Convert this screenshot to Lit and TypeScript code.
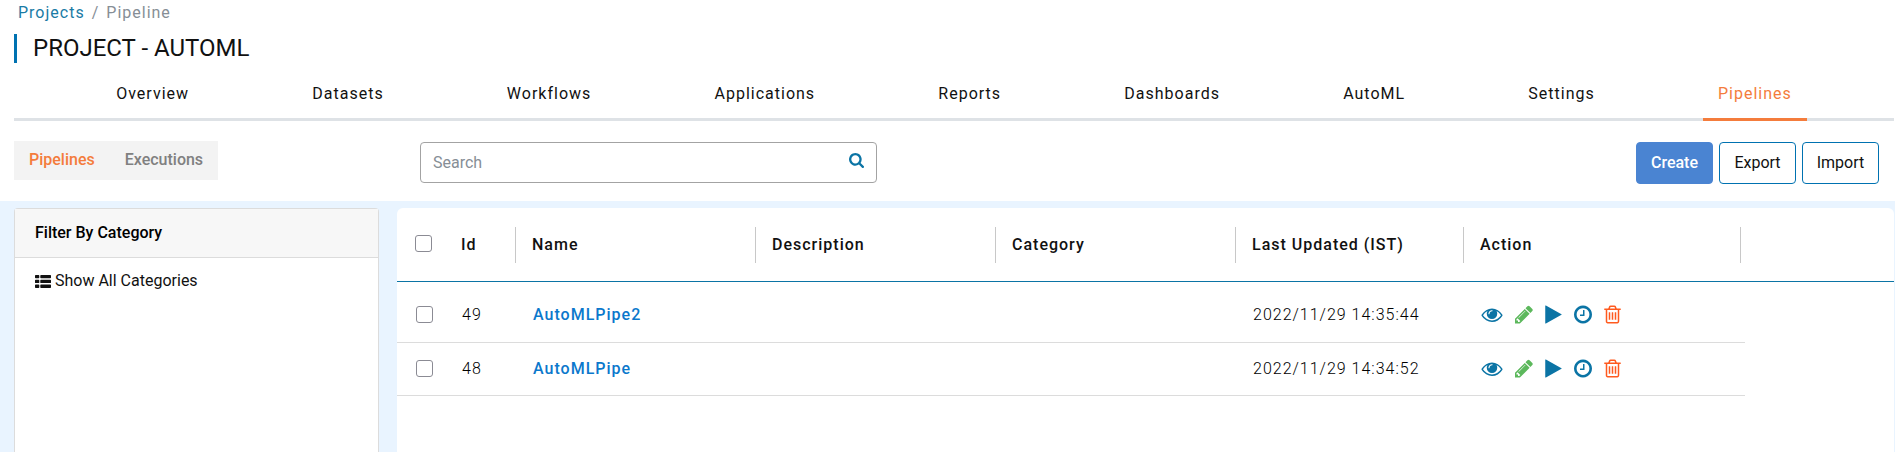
import { LitElement, html, css, svg } from "lit";
import { customElement, state } from "lit/decorators.js";
import { classMap } from "lit/directives/class-map.js";

interface Glyph {
  box: string;
  d: string;
}

const glyphs: Record<string, Glyph> = {
  find: {
    box: "64 128 1664 1664",
    d: "M1216 832q0-185-131.500-316.500t-316.500-131.500-316.500 131.500-131.500 316.500 131.500 316.500 316.500 131.500 316.500-131.500 131.500-316.500zm512 832q0 52-38 90t-90 38q-54 0-90-38l-343-342q-179 124-399 124-143 0-273.500-55.500t-225-150-150-225-55.500-273.500 55.500-273.500 150-225 225-150 273.500-55.500 273.500 55.500 225 150 150 225 55.500 273.500q0 220-124 399l343 343q37 37 37 90z",
  },
  list: {
    box: "0 0 16 13",
    d: "M.7 0h2.9q.7 0 .7.7v1.900q0 .7-.7.7H.7q-.7 0-.7-.7V.7Q0 0 .7 0zM6 0h9.300q.7 0 .7.7v1.900q0 .7-.7.7H6q-.7 0-.7-.7V.7q0-.7.7-.7zM.7 4.800h2.900q.7 0 .7.7v1.900q0 .7-.7.7H.7q-.7 0-.7-.7V5.500q0-.7.7-.7zm5.300 0h9.300q.7 0 .7.7v1.900q0 .7-.7.7H6q-.7 0-.7-.7V5.500q0-.7.7-.7zM.7 9.600h2.900q.7 0 .7.7v1.900q0 .7-.7.7H.7q-.7 0-.7-.7v-1.900q0-.7.7-.7zm5.300 0h9.300q.7 0 .7.7v1.900q0 .7-.7.7H6q-.7 0-.7-.7v-1.900q0-.7.7-.7z",
  },
  view: {
    box: "0 0 1792 1792",
    d: "M1664 960q-152-236-381-353 61 104 61 225 0 185-131.500 316.500t-316.500 131.500-316.500-131.500-131.500-316.500q0-121 61-225-229 117-381 353 133 205 333.500 326.500t434.500 121.500 434.500-121.500 333.500-326.500zm-720-384q0-20-14-34t-34-14q-125 0-214.500 89.500t-89.500 214.500q0 20 14 34t34 14 34-14 14-34q0-86 61-147t147-61q20 0 34-14t14-34zm848 384q0 34-20 69-140 230-376.500 368.500t-499.500 138.500-499.500-139-376.500-368q-20-35-20-69t20-69q140-229 376.500-368t499.500-139 499.500 139 376.500 368q20 35 20 69z",
  },
  edit: {
    box: "128 0 1536 1792",
    d: "M491 1536l91-91-235-235-91 91v107h128v128h107zm523-928q0-22-22-22-10 0-17 7l-542 542q-7 7-7 17 0 22 22 22 10 0 17-7l542-542q7-7 7-17zm-54-192l416 416-832 832h-416v-416zm683 96q0 53-37 90l-166 166-416-416 166-165q36-38 90-38 53 0 91 38l235 234q37 39 37 91z",
  },
  run: {
    box: "192 0 1408 1792",
    d: "M1576 927l-1328 738q-23 13-39.500 3t-16.500-36v-1472q0-26 16.500-36t39.500 3l1328 738q23 13 23 31t-23 31z",
  },
  schedule: {
    box: "128 0 1536 1792",
    d: "M1024 544v448q0 14-9 23t-23 9h-320q-14 0-23-9t-9-23v-64q0-14 9-23t23-9h224v-352q0-14 9-23t23-9h64q14 0 23 9t9 23zm416 352q0-148-73-273t-198-198-273-73-273 73-198 198-73 273 73 273 198 198 273 73 273-73 198-198 73-273zm224 0q0 209-103 385.500t-279.500 279.500-385.500 103-385.500-103-279.500-279.500-103-385.500 103-385.500 279.500-279.500 385.500-103 385.500 103 279.500 279.500 103 385.500z",
  },
  remove: {
    box: "192 0 1408 1792",
    d: "M704 736v576q0 14-9 23t-23 9h-64q-14 0-23-9t-9-23v-576q0-14 9-23t23-9h64q14 0 23 9t9 23zm256 0v576q0 14-9 23t-23 9h-64q-14 0-23-9t-9-23v-576q0-14 9-23t23-9h64q14 0 23 9t9 23zm256 0v576q0 14-9 23t-23 9h-64q-14 0-23-9t-9-23v-576q0-14 9-23t23-9h64q14 0 23 9t9 23zm128 724v-948h-896v948q0 22 7 40.500t14.500 27 10.500 8.500h832q3 0 10.500-8.500t14.500-27 7-40.500zm-672-1076h448l-48-117q-7-9-17-11h-317q-10 2-17 11zm928 32v64q0 14-9 23t-23 9h-96v948q0 83-47 143.500t-113 60.500h-832q-66 0-113-58.500t-47-141.500v-952h-96q-14 0-23-9t-9-23v-64q0-14 9-23t23-9h309l70-167q15-37 54-63t79-26h320q40 0 79 26t54 63l70 167h309q14 0 23 9t9 23z",
  },
};

const icon = (name: string) => html`
  <svg class="icon ${name}" viewBox=${glyphs[name].box} aria-hidden="true">
    ${svg`<path d=${glyphs[name].d}></path>`}
  </svg>
`;

interface Pipeline {
  id: number;
  name: string;
  description: string;
  category: string;
  updated: string;
}

const sections = [
  "Overview", "Datasets", "Workflows", "Applications", "Reports",
  "Dashboards", "AutoML", "Settings", "Pipelines",
];

const actions = [
  ["view", "View"],
  ["edit", "Edit"],
  ["run", "Run"],
  ["schedule", "Schedule"],
  ["remove", "Delete"],
];

@customElement("app-root")
export class AppRoot extends LitElement {
  @state() private section = "Pipelines";
  @state() private mode = "Pipelines";
  @state() private pipelines: Pipeline[] = [
    { id: 49, name: "AutoMLPipe2", description: "", category: "", updated: "2022/11/29 14:35:44" },
    { id: 48, name: "AutoMLPipe", description: "", category: "", updated: "2022/11/29 14:34:52" },
  ];

  static styles = css`
    :host {
      --blue: #0b74a5;
      --orange: #f47c3c;
      --ink: #111;
      --line: #dee2e6;
      --tracking: 1px;
      display: flex;
      flex-direction: column;
      min-height: 100vh;
      overflow: hidden;
      background: #fff;
      color: var(--ink);
      font: 400 16px/24px Roboto, sans-serif;
    }
    * { box-sizing: border-box; }
    a { color: inherit; text-decoration: none; }
    button { margin: 0; font: inherit; color: inherit; cursor: pointer; }
    .icon { display: block; fill: currentColor; }

    .crumbs {
      display: flex;
      gap: 7px;
      padding: 1px 18px 0;
      letter-spacing: var(--tracking);
      color: #868e96;
    }
    .crumbs a { color: #1a7ba5; }
    .title {
      margin: 9px 0 0 14px;
      padding-left: 16px;
      border-left: 3px solid #0072b1;
      font-size: 24px;
      line-height: 29px;
      font-weight: 400;
    }
    .tabs {
      display: flex;
      justify-content: space-evenly;
      margin: 9px 1px 0 14px;
      background: linear-gradient(var(--line), var(--line)) bottom / 100% 3px no-repeat;
      letter-spacing: var(--tracking);
    }
    .tab {
      margin: 0 6px;
      padding: 10px 15px 12px;
      border-bottom: 3px solid transparent;
    }
    .tab.on { color: var(--orange); border-color: var(--orange); }

    .toolbar {
      display: grid;
      grid-template-columns: 406px 457px 1fr;
      align-items: start;
      padding: 20px 16px 17px 14px;
    }
    .modes { display: flex; justify-self: start; background: #f3f3f3; }
    .mode {
      padding: 7px 15px 8px;
      border: 0;
      background: none;
      font-weight: 500;
      color: #808080;
    }
    .mode.on { color: var(--orange); }
    .search {
      display: flex;
      align-items: center;
      height: 41px;
      margin-top: 1px;
      padding: 0 12px;
      border: 1px solid #a3a3a3;
      border-radius: 4px;
      color: var(--blue);
    }
    .search input {
      flex: 1;
      min-width: 0;
      padding: 0;
      border: 0;
      outline: 0;
      background: none;
      font: inherit;
      color: var(--ink);
    }
    .search input::placeholder { color: #868e96; opacity: 1; }
    .search label { display: flex; padding-bottom: 4px; }
    .icon.find { width: 15px; height: 15px; }
    .buttons { display: flex; justify-content: flex-end; gap: 6px; margin-top: 1px; }
    .button {
      min-width: 77px;
      height: 42px;
      padding: 0 12px;
      border: 1px solid #0072b1;
      border-radius: 4px;
      background: #fff;
      font-weight: 400;
    }
    .button.primary { border-color: #4a84d2; background: #4a84d2; color: #fff; font-weight: 500; }

    .content {
      flex: 1;
      display: grid;
      grid-template-columns: 365px minmax(0, 1fr);
      gap: 18px;
      padding: 7px 1px 0 14px;
      background: #e9f4ff;
    }
    .filter {
      border: 1px solid #dcdcdc;
      border-bottom: 0;
      border-radius: 4px 4px 0 0;
      background: #fff;
    }
    .filter h2 {
      margin: 0;
      padding: 12px 20px;
      border-bottom: 1px solid #dcdcdc;
      background: #f7f7f7;
      color: #000;
      font-size: 16px;
      line-height: 24px;
      font-weight: 500;
    }
    .all {
      display: flex;
      align-items: center;
      gap: 4px;
      padding: 11px 20px;
    }
    .icon.list { width: 16px; height: 13px; }

    .panel { border-radius: 6px 6px 0 0; background: #fff; overflow: hidden; }
    table {
      width: 100%;
      table-layout: fixed;
      border-collapse: separate;
      border-spacing: 0;
      letter-spacing: var(--tracking);
    }
    th, td { padding: 0; text-align: left; }
    th { height: 74px; border-bottom: 1px solid var(--blue); font-weight: 500; }
    td { height: 53px; padding-left: 1px; border-bottom: 1px solid #dcdcdc; font-weight: 300; color: #000; }
    tbody tr:first-child td { height: 61px; padding-top: 6px; }
    td.rest { border: 0; }
    .head {
      display: flex;
      align-items: center;
      height: 36px;
      padding-left: 16px;
      border-left: 1px solid #c8c8c8;
    }
    .head.plain { border: 0; padding: 0; }
    td.inset { padding-left: 18px; }
    .pick-cell { padding-left: 18px; }
    td.pick-cell { padding-left: 19px; }
    .c-pick { width: 64px; }
    .c-id { width: 54px; }
    .c-wide { width: 240px; }
    .c-date { width: 228px; }
    .c-action { width: 277px; }
    .c-gap { width: 5px; }
    .pick {
      display: block;
      appearance: none;
      width: 17px;
      height: 17px;
      margin: 0 0 2px;
      border: 1px solid #8b8b94;
      border-radius: 3px;
      background: #fff;
    }
    .name { color: #0b78cc; font-weight: 500; }
    .actions { display: flex; align-items: center; gap: 12px; padding-bottom: 2px; color: var(--blue); }
    .action { display: flex; padding: 0; border: 0; background: none; }
    .action .icon { height: 21px; width: 18px; }
    .action .view { width: 22px; }
    .action .run, .action .remove { width: 17px; }
    .action .edit { color: #5cb85c; }
    .action .remove { color: #ff5a1f; }
  `;

  private heading(label: string) {
    return html`<th scope="col"><div class="head">${label}</div></th>`;
  }

  private row(p: Pipeline) {
    return html`
      <tr>
        <td class="pick-cell"><input class="pick" type="checkbox" aria-label="Select ${p.name}" /></td>
        <td>${p.id}</td>
        <td class="inset"><a class="name" href="#${p.id}">${p.name}</a></td>
        <td class="inset">${p.description}</td>
        <td class="inset">${p.category}</td>
        <td class="inset">${p.updated}</td>
        <td class="inset">
          <div class="actions">
            ${actions.map(([name, label]) => html`
              <button class="action" type="button" aria-label="${label} ${p.name}">${icon(name)}</button>
            `)}
          </div>
        </td>
        <td></td>
        <td class="rest"></td>
      </tr>
    `;
  }

  render() {
    return html`
      <nav class="crumbs" aria-label="Breadcrumb">
        <a href="#projects">Projects</a><span>/</span><span>Pipeline</span>
      </nav>
      <h1 class="title">PROJECT - AUTOML</h1>
      <nav class="tabs" aria-label="Project">
        ${sections.map((s) => html`
          <a class=${classMap({ tab: true, on: s === this.section })} href="#${s.toLowerCase()}"
            @click=${() => (this.section = s)}>${s}</a>
        `)}
      </nav>
      <div class="toolbar">
        <div class="modes">
          ${["Pipelines", "Executions"].map((m) => html`
            <button type="button" class=${classMap({ mode: true, on: m === this.mode })}
              @click=${() => (this.mode = m)}>${m}</button>
          `)}
        </div>
        <div class="search">
          <input id="query" type="text" placeholder="Search" />
          <label for="query" aria-label="Search">${icon("find")}</label>
        </div>
        <div class="buttons">
          <button type="button" class="button primary">Create</button>
          <button type="button" class="button">Export</button>
          <button type="button" class="button">Import</button>
        </div>
      </div>
      <main class="content">
        <aside class="filter">
          <h2>Filter By Category</h2>
          <a class="all" href="#all">${icon("list")}<span>Show All Categories</span></a>
        </aside>
        <section class="panel">
          <table>
            <colgroup>
              <col class="c-pick" /><col class="c-id" /><col class="c-wide" /><col class="c-wide" />
              <col class="c-wide" /><col class="c-date" /><col class="c-action" /><col class="c-gap" /><col />
            </colgroup>
            <thead>
              <tr>
                <th class="pick-cell"><input class="pick" type="checkbox" aria-label="Select all" /></th>
                <th scope="col"><div class="head plain">Id</div></th>
                ${["Name", "Description", "Category", "Last Updated (IST)", "Action"].map((h) => this.heading(h))}
                <th><div class="head"></div></th>
                <th></th>
              </tr>
            </thead>
            <tbody>${this.pipelines.map((p) => this.row(p))}</tbody>
          </table>
        </section>
      </main>
    `;
  }
}
